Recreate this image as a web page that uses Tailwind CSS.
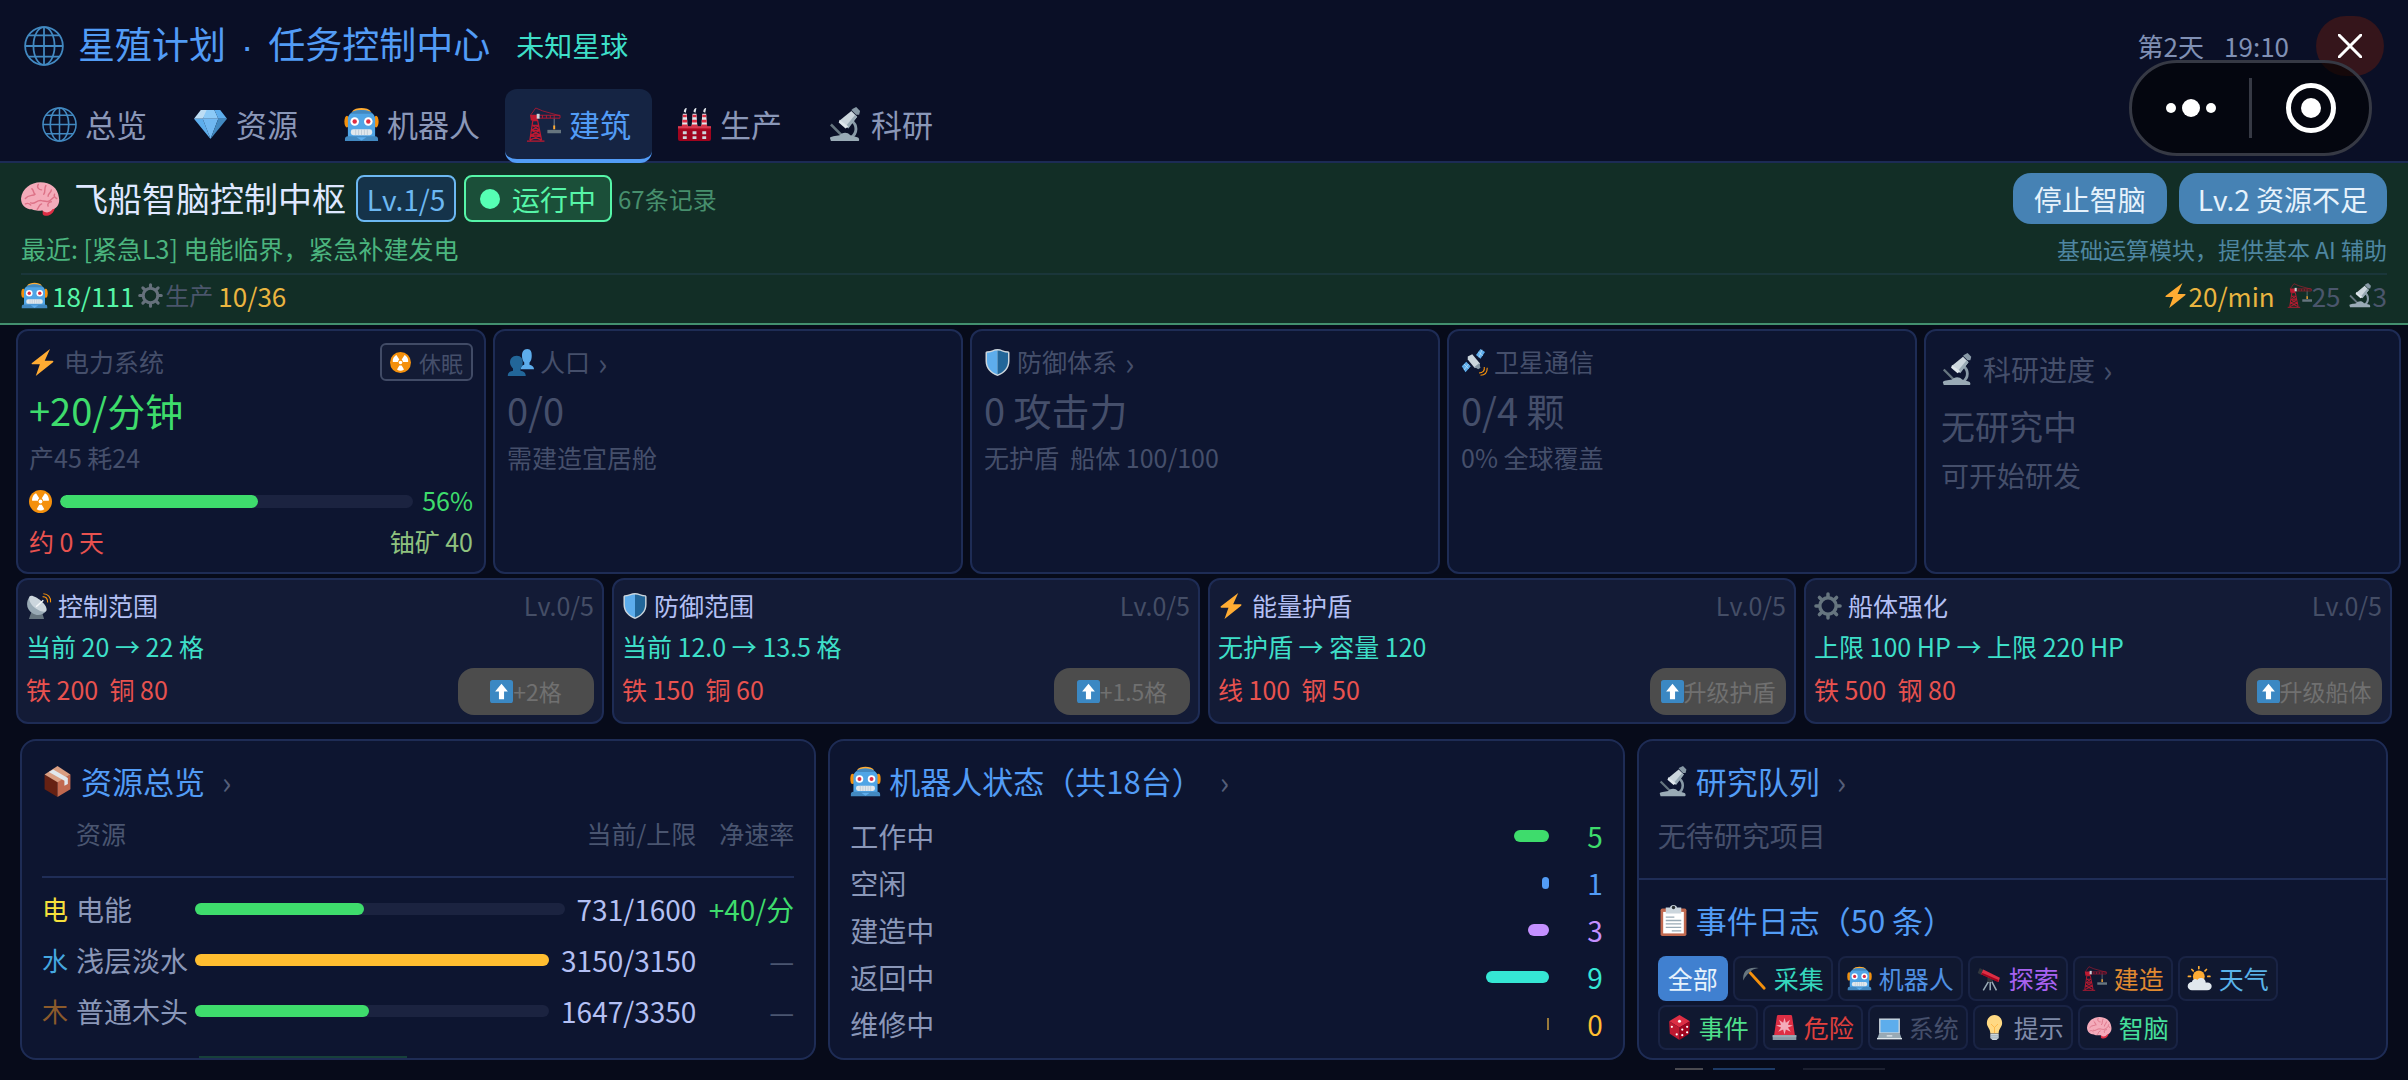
<!DOCTYPE html>
<html lang="zh-CN">
<head>
  <meta charset="UTF-8">
  <meta name="viewport" content="width=device-width, initial-scale=1">
  <title>星殖计划 · 任务控制中心</title>
  <script src="https://cdn.jsdelivr.net/npm/@tailwindcss/browser@4"></script>
</head>
<body class="h-screen flex flex-col overflow-hidden bg-[#070b1a] text-[#8a97b8] font-['Noto_Sans_CJK_SC',sans-serif]">

  <!-- Icon set -->
  <svg class="hidden" aria-hidden="true">
    <symbol id="globe" viewBox="0 0 36 36">
      <g fill="none" stroke="#4289c1" stroke-width="1.6">
        <circle cx="18" cy="18" r="17"/>
        <ellipse cx="18" cy="18" rx="9.5" ry="17"/>
        <path d="M18 1v34M1 18h34M4 8.5h28M4 27.5h28"/>
      </g>
    </symbol>
    <symbol id="gem" viewBox="0 0 36 36">
      <path fill="#bdddf4" d="M8 3h8l-6 9H1z"/>
      <path fill="#8ccaf7" d="M10 12l4-9h8l4 9z"/>
      <path fill="#5dadec" d="M28 3l7 9h-9l-4-9zM1 12h9l8 21z"/>
      <path fill="#70b8f2" d="M10 12h16l-8 21z"/>
      <path fill="#4289c1" d="M35 12h-9l-8 21z"/>
    </symbol>
    <symbol id="robot" viewBox="0 0 36 36">
      <ellipse cx="33" cy="15" rx="2.6" ry="6" fill="#f4900c"/>
      <ellipse cx="3" cy="15" rx="2.6" ry="6" fill="#f4900c"/>
      <path fill="#ffac33" d="M8 5C10 2 14 1 18 1s8 1 10 4z"/>
      <path fill="#50a5e6" d="M4 32V12c0-5 6-9 14-9s14 4 14 9v20z"/>
      <path fill="#4289c1" d="M7 7c2-3 6-4 11-4s9 1 11 4zM1 33c0-2 1-3 3-3h28c2 0 3 1 3 3v2H1z"/>
      <circle cx="11" cy="15" r="4.4" fill="#fff"/><circle cx="25" cy="15" r="4.4" fill="#fff"/>
      <circle cx="11" cy="15" r="2.3" fill="#dd2e44"/><circle cx="25" cy="15" r="2.3" fill="#dd2e44"/>
      <rect x="7" y="23" width="22" height="6" rx="2.5" fill="#e1e8ed"/>
      <path stroke="#b8c8d4" stroke-width=".8" d="M12 23v6M18 23v6M24 23v6M15 23v6M21 23v6"/>
      <path fill="#5dadec" d="M13 31h10l-5 3.500z"/>
    </symbol>
    <symbol id="crane" viewBox="0 0 36 36">
      <g fill="none" stroke="#be1931" stroke-width="1.300">
        <path d="M1 35h18M4 34L7 14h5l4 20M5 29h10M6 24h8M6.500 19h6M5 29l9-5M15 29l-9-5M6 24l7-5M14 24l-7-5M4 34l11-5M16 34L5 29"/>
        <path d="M5 8l5-7 7 3 18 5" stroke-width=".8"/>
        <path d="M12 8.500h23v3H12zM17 8.500v3M21 8.500v3M25 8.500v3M29 8.500v3" stroke-width=".9"/>
      </g>
      <path fill="#be1931" d="M4 8h8v6H5z"/>
      <path fill="#ccd6dd" d="M11 7h3v5h-3z"/>
      <path stroke="#8899a6" stroke-width=".8" d="M29 12v8"/>
      <path fill="#ffac33" d="M28 19h2v4h-2z"/>
      <path fill="#66757f" d="M22 23.500h14V27H22z"/>
    </symbol>
    <symbol id="factory" viewBox="0 0 36 36">
      <path fill="#e1e8ed" d="M6 7h4l1 14H5zM16 7h4l1 14h-6zM26 7h4l1 14h-6z"/>
      <path fill="#dd2e44" d="M6 8h4v2.500H6zM5.500 13h5v3h-5zM16 8h4v2.500h-4zM15.500 13h5v3h-5zM26 8h4v2.500h-4zM25.500 13h5v3h-5zM5 18h6v3H5zM15 18h6v3h-6zM25 18h6v3h-6z"/>
      <path fill="#e1e8ed" d="M7 5c0-2 1-4 3-4l-1 5zM17 5c0-2 1-4 3-4l-1 5zM27 5c0-2 1-4 3-4l-1 5z"/>
      <path fill="#a0041e" d="M1 20h34v13a2 2 0 01-2 2H3a2 2 0 01-2-2z"/>
      <path fill="#be1931" d="M1 20h34v3H1z"/><path fill="#ea596e" d="M1 20h34v1H1z"/>
      <path fill="#ccd6dd" d="M6 25h4v3H6zM16 25h4v3h-4zM26 25h4v3h-4zM6 30h4v3H6zM16 30h4v3h-4zM26 30h4v3h-4z"/>
    </symbol>
    <symbol id="scope" viewBox="0 0 36 36">
      <path fill="none" stroke="#66757f" stroke-width="2.600" d="M3 18l12 12"/>
      <path fill="none" stroke="#8899a6" stroke-width="3" d="M24 14c6 4 7 13-1 18"/>
      <path fill="#99aab5" d="M2 32c0-2 6-2 10-3 2-3 8-4 11 0l7 2c2 0 3 4 1 4H3z"/>
      <path fill="#8899a6" d="M26 1.500l3-1.500 4 4-1 4-3 0-5-5z"/>
      <path fill="#ccd6dd" d="M24 4l6 6-9 11-9-7z"/>
      <path fill="#99aab5" d="M28 8l2 2-9 12-3-2z"/>
      <path fill="#e1e8ed" d="M12 13l9 7-3 2-7-6z"/>
    </symbol>
    <symbol id="brain" viewBox="0 0 36 36">
      <path fill="#dd2e44" d="M20 26c3-2 9-3 11-1 1 4-3 9-7 9-3 0-4-1-4-2z"/>
      <path fill="#f4abba" d="M18 3C9 3 1 9 0 18c0 6 4 10 10 10 4 2 8 1 10 1 3 3 7 2 9-1 5-1 7-6 6-11-1-9-8-14-17-14z"/>
      <g fill="none" stroke="#dd7287" stroke-width="1.300" stroke-linecap="round">
        <path d="M4 18c3-4 7-2 9-4M10 9c2 1 1 4 3 5M16 5c-2 3 1 5 3 5M23 6c-2 3 0 6-2 8M28 10c0 3-3 3-3 6M9 22c4 2 5-3 10-2s6 2 11-3M15 28c2-2 1-4 4-5M25 25c-1-2 1-4 3-4M4 23c2-1 3-1 5 1M31 14c-1 2 0 3 2 4"/>
      </g>
    </symbol>
    <symbol id="gear" viewBox="0 0 36 36">
      <circle cx="18" cy="18" r="10.500" fill="none" stroke="currentColor" stroke-width="4.400"/>
      <path stroke="currentColor" stroke-width="4.500" stroke-linecap="round" d="M18 2.500v4M18 29.500v4M2.500 18h4M29.500 18h4M7 7l3 3M26 26l3 3M29 7l-3 3M10 26l-3 3"/>
    </symbol>
    <symbol id="bolt" viewBox="0 0 36 36">
      <path fill="#ffac33" d="M28 0L4 18.500c-1 .800-.5 1.800.8 1.800h9.700L9 36l23-18.500c1-.800.500-1.800-.8-1.800H21z"/>
    </symbol>
    <symbol id="nuke" viewBox="0 0 36 36">
      <circle cx="18" cy="18" r="18" fill="#f4900c"/>
      <circle cx="18" cy="18" r="3" fill="#fff"/>
      <path fill="#fff" d="M16 13L11 5c-4 2-7 7-6 12h9c0-2 1-3 2-4zM20 13l5-8c4 2 7 7 6 12h-9c0-2-1-3-2-4zM16 23h4l4 7c-4 3-8 3-12 0z"/>
    </symbol>
    <symbol id="people" viewBox="0 0 36 36">
      <path fill="#5dadec" d="M36 27H18c0-4 2-5 5-6v-3c-2-2-3-5-3-9 0-5 2-9 7-9s6 4 6 9c0 4-1 7-3 9v3c3 1 6 2 6 6z"/>
      <path fill="#226699" d="M25 36H1c0-5 3-6 7-7v-3c-2-2-4-5-4-8 0-5 3-9 9-9s8 4 8 9c0 3-1 6-3 8v3c4 1 7 2 7 7z"/>
    </symbol>
    <symbol id="shield" viewBox="0 0 36 36">
      <path fill="#ccd6dd" d="M34 5c0-1-1-2-2-2C26 3 23 0 18 0S10 3 4 3C3 3 2 4 2 5v11c0 10 7 17 16 20 9-3 16-10 16-20z"/>
      <path fill="#5dadec" d="M18 34C10 31 4 25 4 16V5c5 0 9-3 14-3z"/>
      <path fill="#226699" d="M18 34c8-3 14-9 14-18V5c-5 0-9-3-14-3z"/>
    </symbol>
    <symbol id="satellite" viewBox="0 0 36 36">
      <path fill="#5dadec" d="M20 8l6-8 6 4-6 9zM1 23l6-6 6 6-7 8z"/>
      <path stroke="#bdddf4" stroke-width="1" d="M23 4l6 5M4 20l6 6M28 1l-4 10M4 28l6-8"/>
      <path fill="#ccd6dd" d="M9 10l6-3 10 12-1 6-6 0L9 14z"/>
      <path fill="#8899a6" d="M18 24l6-5 2 6-3 2z"/>
      <path fill="none" stroke="#f4900c" stroke-width="1.500" d="M31 24c1 5-2 8-7 8M35 25c0 7-4 10-9 10"/>
    </symbol>
    <symbol id="dish" viewBox="0 0 36 36">
      <path fill="#66757f" d="M9 22h12l4 14H4z"/>
      <path fill="#99aab5" d="M5 5c-6 9-4 18 4 23 6 4 14 3 19-3z"/>
      <path fill="#ccd6dd" d="M5 5c-2 4 1 11 8 16s13 6 15 4c2-3-1-9-7-14S7 2 5 5z"/>
      <path stroke="#f5f8fa" stroke-width="2" d="M14 19l10-9"/>
      <path fill="none" stroke="#f4900c" stroke-width="1.500" d="M23 5c4 0 7 3 7 8M24 1c6 0 11 5 10 12"/>
    </symbol>
    <symbol id="up" viewBox="0 0 36 36">
      <rect width="36" height="36" rx="4" fill="#3b88c3"/>
      <path fill="#fff" d="M18 6l10 12h-6v12h-8V18H8z"/>
    </symbol>
    <symbol id="box" viewBox="0 0 36 36">
      <path fill="#662113" d="M3 10l15 8v18L3 27z"/>
      <path fill="#c1694f" d="M33 10l-15 8v18l15-9z"/>
      <path fill="#d99e82" d="M18 0l15 10-15 9L3 10z"/>
      <path fill="#e1e8ed" d="M8 7l5-3 17 10v7l-4 2v-6z"/>
    </symbol>
    <symbol id="clip" viewBox="0 0 36 36">
      <rect x="3" y="4" width="30" height="32" rx="2" fill="#c1694f"/>
      <path fill="#fff" d="M6 8h24v25H6z"/>
      <path fill="#ccd6dd" d="M9 3h5c0-4 8-4 8 0h5v7H9z"/>
      <circle cx="18" cy="3" r="2" fill="#292f33"/>
      <path stroke="#99aab5" stroke-width="1.500" d="M9 14h10M9 18h18M9 22h18M9 26h18M16 30h11"/>
    </symbol>
    <symbol id="pick" viewBox="0 0 36 36">
      <path stroke="#f4900c" stroke-width="4" stroke-linecap="round" d="M11 9l21 23"/>
      <path fill="#66757f" d="M2 21C0 8 8 0 24 3c-7 1-10 3-13 6s-7 6-9 12z"/>
    </symbol>
    <symbol id="tele" viewBox="0 0 36 36">
      <path stroke="#99aab5" stroke-width="2.200" d="M18 20L9 35M19 20v15M20 20l8 15"/>
      <path fill="#31373d" d="M15 16h7v7h-7zM4 3l6 3-4 7-5-3z"/>
      <path fill="#dd2e44" d="M9 5l24 12-2 6L6 12z"/>
      <path fill="#a0041e" d="M8 10l23 10-1 3L6 12z"/>
    </symbol>
    <symbol id="sun" viewBox="0 0 36 36">
      <path stroke="#ffac33" stroke-width="2.400" stroke-linecap="round" d="M17 1v3M7 5l2 2M28 5l-2 2M2 15h3M30 15h3"/>
      <circle cx="17" cy="15" r="8.500" fill="#ffac33"/>
      <path fill="#e1e8ed" d="M7 35a6 6 0 010-12c1-4 5-6 8-3 3-5 12-3 12 4 11-2 11 11 2 11z"/>
    </symbol>
    <symbol id="dice" viewBox="0 0 36 36">
      <path fill="#dd2e44" d="M18 0l15 9-15 9L3 9z"/>
      <path fill="#be1931" d="M3 9l15 9v18L4 27z"/>
      <path fill="#a0041e" d="M33 9l-15 9v18l14-9z"/>
      <g fill="#fff"><circle cx="18" cy="9" r="2.200"/><circle cx="7" cy="17" r="1.600"/><circle cx="14" cy="28" r="1.600"/><circle cx="22" cy="29" r="1.600"/><circle cx="22" cy="21" r="1.600"/><circle cx="29" cy="17" r="1.600"/><circle cx="29" cy="25" r="1.600"/></g>
    </symbol>
    <symbol id="siren" viewBox="0 0 36 36">
      <path fill="#dd2e44" d="M7 2c0-1 1-2 2-2h18c1 0 2 1 2 2l4 27H3z"/>
      <path fill="#f4abba" d="M18 4l2 7 6-4-3 7 7 1-7 3 4 6-7-3-2 7-2-7-7 3 4-6-7-3 7-1-3-7 6 4z"/>
      <path fill="#8899a6" d="M1 29h34v7H1z"/><path fill="#99aab5" d="M1 29h34v3H1z"/>
    </symbol>
    <symbol id="laptop" viewBox="0 0 36 36">
      <path fill="#ccd6dd" d="M3 5h30v22H3z"/><path fill="#5dadec" d="M5 7h26v18H5z"/>
      <path fill="#99aab5" d="M3 27h30l3 8H0z"/><path fill="#e1e8ed" d="M0 33h36v2H0zM14 29h8v2h-8z"/>
    </symbol>
    <symbol id="bulb" viewBox="0 0 36 36">
      <path fill="#ffd983" d="M29 11.500C29 5 24 0 18 0S7 5 7 11.500c0 6 5 8 5 15h12c0-7 5-9 5-15z"/>
      <path fill="none" stroke="#ffac33" d="M13 13l5 5 5-5M18 18v8"/>
      <path fill="#ccd6dd" d="M12 27h12v6l-3 3h-6l-3-3z"/><path stroke="#8899a6" d="M12 30h12M12 33h12"/>
    </symbol>
  </svg>

  <!-- Header -->
  <header class="relative bg-[#0a0f26] border-b-2 border-[#1c2b55] pt-[13px]">
    <div class="flex items-center h-[66px] pl-6 pr-6">
      <svg class="size-10 mr-[14px]"><use href="#globe"/></svg>
      <h1 class="pb-[2px] text-[37px] leading-10 text-[#529cf6]">星殖计划<span class="mx-[15px] font-['Liberation_Sans',sans-serif]">·</span>任务控制中心</h1>
      <span class="ml-[26px] pb-[2px] text-[28px] leading-10 text-[#3edfc8]">未知星球</span>
      <div class="ml-auto flex items-center text-[26px] leading-10 text-[#8090b4]">
        <span>第2天</span>
        <span class="ml-[20px]">19:10</span>
        <button type="button" aria-label="关闭" class="ml-[27px] w-[68px] h-[60px] rounded-[30px] bg-[#35151b] flex items-center justify-center">
          <svg class="size-6" viewBox="0 0 24 24" stroke="#fff" stroke-width="3"><path d="M0 0l24 24M24 0L0 24"/></svg>
        </button>
      </div>
    </div>
    <nav class="flex gap-1 mt-[10px] -mb-[2px] relative pl-[21px] text-[31px] leading-10 text-[#8a97b8]">
      <a href="#" class="h-[74px] px-[21px] border-b-4 border-transparent flex items-center gap-[8px]"><svg class="size-[35px]"><use href="#globe"/></svg>总览</a>
      <a href="#" class="h-[74px] px-[21px] border-b-4 border-transparent flex items-center gap-[8px]"><svg class="size-[35px]"><use href="#gem"/></svg>资源</a>
      <a href="#" class="h-[74px] px-[21px] border-b-4 border-transparent flex items-center gap-[8px]"><svg class="size-[35px]"><use href="#robot"/></svg>机器人</a>
      <a href="#" aria-current="page" class="h-[74px] px-[21px] border-b-4 border-[#529cf6] rounded-xl bg-[#152443] text-[#529cf6] flex items-center gap-[8px]"><svg class="size-[35px]"><use href="#crane"/></svg>建筑</a>
      <a href="#" class="h-[74px] px-[21px] border-b-4 border-transparent flex items-center gap-[8px]"><svg class="size-[35px]"><use href="#factory"/></svg>生产</a>
      <a href="#" class="h-[74px] px-[21px] border-b-4 border-transparent flex items-center gap-[8px]"><svg class="size-[35px]"><use href="#scope"/></svg>科研</a>
    </nav>

    <!-- Floating capsule -->
    <div class="absolute z-10 right-[36px] top-[60px] w-[243px] h-24 rounded-full border-3 border-[#363944] bg-black/60 flex items-center">
      <button type="button" aria-label="更多" class="flex-1 flex items-center justify-center gap-[6px]">
        <span class="size-[10px] rounded-full bg-white"></span>
        <span class="size-[18px] rounded-full bg-white"></span>
        <span class="size-[10px] rounded-full bg-white"></span>
      </button>
      <span class="w-[3px] h-[60px] bg-[#363944]"></span>
      <button type="button" aria-label="退出" class="flex-1 flex items-center justify-center">
        <span class="size-[50px] rounded-full border-5 border-white flex items-center justify-center"><span class="size-5 rounded-full bg-white"></span></span>
      </button>
    </div>
  </header>

  <!-- Ship brain -->
  <section class="bg-[#122e26] border-b-2 border-[#43906f] px-[21px] pt-[10px] pb-[8px]">
    <div class="flex items-center h-[51px]">
      <svg class="size-[39px] mr-[14px]"><use href="#brain"/></svg>
      <h2 class="pb-[2px] text-[34px] leading-10 text-[#dfe8ff]">飞船智脑控制中枢</h2>
      <span class="ml-[10px] w-[100px] h-[47px] rounded-lg border-2 border-[#6cb8f2] bg-[#15334a] text-[#6cb8f2] text-[28px] flex items-center justify-center">Lv.1/5</span>
      <span class="ml-2 w-[148px] h-[47px] rounded-lg border-2 border-[#56f5a8] bg-[#1b4f39] text-[#56f5a8] text-[28px] flex items-center justify-center gap-3"><i class="size-5 rounded-full bg-[#56ffb4]"></i>运行中</span>
      <span class="ml-[6px] text-[24px] text-[#478f6d]">67条记录</span>
      <button type="button" class="ml-auto h-[51px] px-[21px] rounded-[18px] bg-[#4682b4] text-[#e6f2fc] text-[28px]">停止智脑</button>
      <button type="button" class="ml-3 h-[51px] px-[19px] rounded-[18px] bg-[#4682b4] text-[#e6f2fc] text-[28px]">Lv.2 资源不足</button>
    </div>
    <div class="flex items-center justify-between mt-[7px] h-9">
      <p class="text-[25px] text-[#4bb57f]">最近: [紧急L3] 电能临界，紧急补建发电</p>
      <p class="text-[23px] text-[#4e86a0]">基础运算模块，提供基本 AI 辅助</p>
    </div>
    <div class="mt-[6px] border-t-2 border-[#1a363a] h-[42px] flex items-center text-[26px]">
      <svg class="size-[27px] mr-[4px]"><use href="#robot"/></svg>
      <span class="text-[#56f5a8]">18/111</span>
      <svg class="size-[25px] ml-1 mr-[2px] text-[#66717c]"><use href="#gear"/></svg>
      <span class="text-[24px] text-[#4b566c]">生产</span>
      <span class="ml-[5px] text-[#eab540]">10/36</span>
      <svg class="size-[25px] ml-auto mr-[1px]"><use href="#bolt"/></svg>
      <span class="text-[#eab540]">20/min</span>
      <svg class="size-[25px] ml-[12px]"><use href="#crane"/></svg>
      <span class="text-[#4b566c]">25</span>
      <svg class="size-[25px] ml-[7px]"><use href="#scope"/></svg>
      <span class="text-[#4b566c]">3</span>
    </div>
  </section>

  <!-- Status cards -->
  <section class="mt-1 ml-4 mr-[7px] grid grid-cols-5 text-[25px] text-[#454f6b]">
    <article class="mr-[7px] min-h-[245px] rounded-xl border-2 border-[#1e2c55] bg-[#0d1530] px-[11px] pt-[12px]">
      <div class="flex items-center h-[38px]">
        <svg class="size-[27px] mr-[8px]"><use href="#bolt"/></svg>
        <h3>电力系统</h3>
        <span class="ml-auto h-[38px] px-[8px] rounded-md border-2 border-[#414b66] bg-[#131b35] text-[22px] flex items-center gap-2"><svg class="size-[21px]"><use href="#nuke"/></svg>休眠</span>
      </div>
      <p class="mt-[9px] text-[38px] leading-10 text-[#3edc6c]">+20/分钟</p>
      <p class="mt-[10px] leading-[34px]">产45 耗24</p>
      <div class="flex items-center mt-[10px] h-[34px]">
        <svg class="size-[23px] mr-2"><use href="#nuke"/></svg>
        <div class="flex-1 h-[13px] rounded-full bg-[#1b2340] overflow-hidden"><div class="h-full rounded-full bg-[#3edc6c]" style="width:56%"></div></div>
        <span class="ml-[9px] text-[#3edc6c]">56%</span>
      </div>
      <div class="flex justify-between mt-[6px] leading-[34px]"><span class="text-[#e8524f]">约 0 天</span><span class="text-[#8fc27f]">铀矿 40</span></div>
    </article>
    <article class="mr-[7px] rounded-xl border-2 border-[#1e2c55] bg-[#0d1530] px-[12px] pt-[12px]">
      <div class="flex items-center h-[38px]"><svg class="size-[27px] mr-[6px]"><use href="#people"/></svg><h3>人口</h3><span class="ml-2 text-[31px]">›</span></div>
      <p class="mt-[9px] text-[38px] leading-10">0/0</p>
      <p class="mt-[10px] leading-[34px]">需建造宜居舱</p>
    </article>
    <article class="mr-[7px] rounded-xl border-2 border-[#1e2c55] bg-[#0d1530] px-[12px] pt-[12px]">
      <div class="flex items-center h-[38px]"><svg class="size-[27px] mr-[6px]"><use href="#shield"/></svg><h3>防御体系</h3><span class="ml-2 text-[31px]">›</span></div>
      <p class="mt-[9px] text-[38px] leading-10">0 攻击力</p>
      <p class="mt-[10px] leading-[34px]">无护盾&nbsp; 船体 100/100</p>
    </article>
    <article class="mr-[7px] rounded-xl border-2 border-[#1e2c55] bg-[#0d1530] px-[12px] pt-[12px]">
      <div class="flex items-center h-[38px]"><svg class="size-[27px] mr-[6px]"><use href="#satellite"/></svg><h3>卫星通信</h3></div>
      <p class="mt-[9px] text-[38px] leading-10">0/4 颗</p>
      <p class="mt-[10px] leading-[34px]">0% 全球覆盖</p>
    </article>
    <article class="rounded-xl border-2 border-[#1e2c55] bg-[#0d1530] px-[15px] pt-[14px] text-[28px]">
      <div class="flex items-center h-12"><svg class="size-[33px] mr-[9px]"><use href="#scope"/></svg><h3>科研进度</h3><span class="ml-2 text-[31px]">›</span></div>
      <p class="mt-[11px] text-[34px] leading-[44px]">无研究中</p>
      <p class="mt-2 leading-[38px]">可开始研发</p>
    </article>
  </section>

  <!-- Upgrades -->
  <section class="mt-1 mx-4 grid grid-cols-4 gap-2 text-[25px]">
    <article class="rounded-xl border-2 border-[#1e2c55] bg-[#131b36] px-2 pt-[9px] pb-[7px]">
      <div class="flex items-center h-[34px]"><svg class="size-[26px] mr-[6px]"><use href="#dish"/></svg><h3 class="text-[#b4c0f4]">控制范围</h3><span class="ml-auto text-[#454e66]">Lv.0/5</span></div>
      <p class="mt-[6px] leading-[34px] text-[#3edfc8]">当前 20 → 22 格</p>
      <div class="mt-[5px] flex items-center justify-between">
        <span class="pb-1 text-[#e8524f]">铁 200&nbsp; 铜 80</span>
        <button type="button" disabled class="w-[136px] h-[47px] rounded-2xl bg-[#4c4c4c] text-[#707070] text-[23px] flex items-center justify-center"><svg class="size-[23px]"><use href="#up"/></svg>+2格</button>
      </div>
    </article>
    <article class="rounded-xl border-2 border-[#1e2c55] bg-[#131b36] px-2 pt-[9px] pb-[7px]">
      <div class="flex items-center h-[34px]"><svg class="size-[26px] mr-[6px]"><use href="#shield"/></svg><h3 class="text-[#b4c0f4]">防御范围</h3><span class="ml-auto text-[#454e66]">Lv.0/5</span></div>
      <p class="mt-[6px] leading-[34px] text-[#3edfc8]">当前 12.0 → 13.5 格</p>
      <div class="mt-[5px] flex items-center justify-between">
        <span class="pb-1 text-[#e8524f]">铁 150&nbsp; 铜 60</span>
        <button type="button" disabled class="w-[136px] h-[47px] rounded-2xl bg-[#4c4c4c] text-[#707070] text-[23px] flex items-center justify-center"><svg class="size-[23px]"><use href="#up"/></svg>+1.5格</button>
      </div>
    </article>
    <article class="rounded-xl border-2 border-[#1e2c55] bg-[#131b36] px-2 pt-[9px] pb-[7px]">
      <div class="flex items-center h-[34px]"><svg class="size-[26px] mr-[8px]"><use href="#bolt"/></svg><h3 class="text-[#b4c0f4]">能量护盾</h3><span class="ml-auto text-[#454e66]">Lv.0/5</span></div>
      <p class="mt-[6px] leading-[34px] text-[#3edfc8]">无护盾 → 容量 120</p>
      <div class="mt-[5px] flex items-center justify-between">
        <span class="pb-1 text-[#e8524f]">线 100&nbsp; 钢 50</span>
        <button type="button" disabled class="w-[136px] h-[47px] rounded-2xl bg-[#4c4c4c] text-[#707070] text-[23px] flex items-center justify-center"><svg class="size-[23px]"><use href="#up"/></svg>升级护盾</button>
      </div>
    </article>
    <article class="rounded-xl border-2 border-[#1e2c55] bg-[#131b36] px-2 pt-[9px] pb-[7px]">
      <div class="flex items-center h-[34px]"><svg class="size-[28px] mr-[6px] text-[#66757f]"><use href="#gear"/></svg><h3 class="text-[#b4c0f4]">船体强化</h3><span class="ml-auto text-[#454e66]">Lv.0/5</span></div>
      <p class="mt-[6px] leading-[34px] text-[#3edfc8]">上限 100 HP → 上限 220 HP</p>
      <div class="mt-[5px] flex items-center justify-between">
        <span class="pb-1 text-[#e8524f]">铁 500&nbsp; 钢 80</span>
        <button type="button" disabled class="w-[136px] h-[47px] rounded-2xl bg-[#4c4c4c] text-[#707070] text-[23px] flex items-center justify-center"><svg class="size-[23px]"><use href="#up"/></svg>升级船体</button>
      </div>
    </article>
  </section>

  <!-- Panels -->
  <main class="mt-[15px] mx-5 flex-1 min-h-0 grid grid-cols-[1.06fr_1.06fr_1fr] grid-rows-[100%] gap-3 text-[28px]">
    <section class="rounded-2xl border-2 border-[#1e2c55] bg-[#0d1530] px-5 pt-[20px] overflow-hidden">
      <h2 class="flex items-center h-10 text-[31px] text-[#529cf6]"><svg class="size-[31px] mr-[8px]"><use href="#box"/></svg>资源总览<span class="ml-[17px] text-[#555f7a]">›</span></h2>
      <table class="w-full mt-[10px] border-collapse whitespace-nowrap">
        <thead>
          <tr class="border-b-2 border-[#1f2d57] text-[25px] leading-10 text-[#4a5570]">
            <th class="pt-[2px] pb-[23px] pl-[34px] text-left font-normal">资源</th>
            <th class="pt-[2px] pb-[23px] text-right font-normal">当前/上限</th>
            <th class="pt-[2px] pb-[23px] text-right font-normal">净速率</th>
          </tr>
        </thead>
        <tbody class="before:block before:h-[5px]">
          <tr class="h-[51px]">
            <td class="w-[153px]"><div class="flex items-center"><span class="w-[34px] text-[26px] text-[#f5e03c]">电</span>电能</div></td>
            <td><div class="flex items-center text-[#b4c0f4]"><div class="flex-1 h-3 rounded-full bg-[#1b2340]"><div class="h-full rounded-full bg-[#3edc6c]" style="width:45.7%"></div></div><span class="ml-3">731/1600</span></div></td>
            <td class="w-[98px] text-right text-[#3edc6c]">+40/分</td>
          </tr>
          <tr class="h-[51px]">
            <td><div class="flex items-center"><span class="w-[34px] text-[26px] text-[#45a8e0]">水</span>浅层淡水</div></td>
            <td><div class="flex items-center text-[#b4c0f4]"><div class="flex-1 h-3 rounded-full bg-[#1b2340]"><div class="h-full rounded-full bg-[#ffbe30]" style="width:100%"></div></div><span class="ml-3">3150/3150</span></div></td>
            <td class="text-right text-[#4a5570]">—</td>
          </tr>
          <tr class="h-[51px]">
            <td><div class="flex items-center"><span class="w-[34px] text-[26px] text-[#8b5a2b]">木</span>普通木头</div></td>
            <td><div class="flex items-center text-[#b4c0f4]"><div class="flex-1 h-3 rounded-full bg-[#1b2340]"><div class="h-full rounded-full bg-[#3edc6c]" style="width:49.1%"></div></div><span class="ml-3">1647/3350</span></div></td>
            <td class="text-right text-[#4a5570]">—</td>
          </tr>
        </tbody>
      </table>
      <div class="mt-[20px] ml-[157px] w-[208px] h-3 bg-[#17403a]"></div>
    </section>

    <section class="rounded-2xl border-2 border-[#1e2c55] bg-[#0d1530] px-5 pt-[20px] overflow-hidden">
      <h2 class="flex items-center h-10 text-[31px] text-[#529cf6]"><svg class="size-[31px] mr-[8px]"><use href="#robot"/></svg>机器人状态（共18台）<span class="ml-[17px] text-[#555f7a]">›</span></h2>
      <ul class="mt-[11px]">
        <li class="flex items-center h-[47px]">工作中<i class="ml-auto h-3 rounded-full bg-[#3edc6c]" style="width:35px"></i><b class="w-[54px] text-right font-normal text-[#3edc6c]">5</b></li>
        <li class="flex items-center h-[47px]">空闲<i class="ml-auto h-3 rounded-full bg-[#529cf6]" style="width:7px"></i><b class="w-[54px] text-right font-normal text-[#529cf6]">1</b></li>
        <li class="flex items-center h-[47px]">建造中<i class="ml-auto h-3 rounded-full bg-[#c490ff]" style="width:21px"></i><b class="w-[54px] text-right font-normal text-[#c490ff]">3</b></li>
        <li class="flex items-center h-[47px]">返回中<i class="ml-auto h-3 rounded-full bg-[#35e6d4]" style="width:63px"></i><b class="w-[54px] text-right font-normal text-[#35e6d4]">9</b></li>
        <li class="flex items-center h-[47px]">维修中<i class="ml-auto h-3 bg-[#9a7a3a]" style="width:2px"></i><b class="w-[54px] text-right font-normal text-[#ffbe30]">0</b></li>
      </ul>
    </section>

    <section class="rounded-2xl border-2 border-[#1e2c55] bg-[#0d1530] overflow-hidden">
      <div class="px-[19px] pt-[20px] pb-[23px] border-b-2 border-[#1f2d57]">
        <h2 class="flex items-center h-10 text-[31px] text-[#529cf6]"><svg class="size-[31px] mr-[7px]"><use href="#scope"/></svg>研究队列<span class="ml-[17px] text-[#555f7a]">›</span></h2>
        <p class="mt-[14px] leading-10 text-[#454f6b]">无待研究项目</p>
      </div>
      <div class="px-[19px] pt-[20px]">
        <h2 class="flex items-center h-10 text-[31px] text-[#529cf6]"><svg class="size-[31px] mr-[7px]"><use href="#clip"/></svg>事件日志（50 条）</h2>
        <div class="mt-[16px] flex flex-wrap gap-x-[5px] gap-y-1 text-[25px]">
          <button type="button" class="h-[45px] px-[10px] rounded-lg bg-[#4080d0] text-[#e6f2fc]">全部</button>
          <button type="button" class="h-[45px] px-[7px] rounded-lg border-2 border-[#192344] bg-[#101830] text-[#35d6bd] flex items-center gap-[7px]"><svg class="size-[25px]"><use href="#pick"/></svg>采集</button>
          <button type="button" class="h-[45px] px-[7px] rounded-lg border-2 border-[#192344] bg-[#101830] text-[#4f90e4] flex items-center gap-[7px]"><svg class="size-[25px]"><use href="#robot"/></svg>机器人</button>
          <button type="button" class="h-[45px] px-[7px] rounded-lg border-2 border-[#192344] bg-[#101830] text-[#a862f0] flex items-center gap-[7px]"><svg class="size-[25px]"><use href="#tele"/></svg>探索</button>
          <button type="button" class="h-[45px] px-[7px] rounded-lg border-2 border-[#192344] bg-[#101830] text-[#e08a30] flex items-center gap-[7px]"><svg class="size-[25px]"><use href="#crane"/></svg>建造</button>
          <button type="button" class="h-[45px] px-[7px] rounded-lg border-2 border-[#192344] bg-[#101830] text-[#5ab4ea] flex items-center gap-[7px]"><svg class="size-[25px]"><use href="#sun"/></svg>天气</button>
          <button type="button" class="h-[45px] px-[7px] rounded-lg border-2 border-[#192344] bg-[#101830] text-[#4fe08c] flex items-center gap-[7px]"><svg class="size-[25px]"><use href="#dice"/></svg>事件</button>
          <button type="button" class="h-[45px] px-[7px] rounded-lg border-2 border-[#192344] bg-[#101830] text-[#e0403e] flex items-center gap-[7px]"><svg class="size-[25px]"><use href="#siren"/></svg>危险</button>
          <button type="button" class="h-[45px] px-[7px] rounded-lg border-2 border-[#192344] bg-[#101830] text-[#454f6b] flex items-center gap-[7px]"><svg class="size-[25px]"><use href="#laptop"/></svg>系统</button>
          <button type="button" class="h-[45px] px-[7px] rounded-lg border-2 border-[#192344] bg-[#101830] text-[#7f8aa8] flex items-center gap-[7px]"><svg class="size-[25px]"><use href="#bulb"/></svg>提示</button>
          <button type="button" class="h-[45px] px-[7px] rounded-lg border-2 border-[#192344] bg-[#101830] text-[#45e09c] flex items-center gap-[7px]"><svg class="size-[25px]"><use href="#brain"/></svg>智脑</button>
        </div>
      </div>
    </section>
  </main>

  <!-- First log line, cut off by the panel edge -->
  <div class="mt-2 mb-[10px] mx-5 grid grid-cols-[1.06fr_1.06fr_1fr] gap-3" aria-hidden="true">
    <div class="col-start-3 flex h-[2px] pl-[38px]">
      <span class="w-[28px] bg-[#4a4a50]"></span>
      <span class="ml-[10px] w-[62px] bg-[#1d3a66]"></span>
      <span class="ml-[28px] w-[82px] bg-[#1c2030]"></span>
    </div>
  </div>
</body>
</html>
